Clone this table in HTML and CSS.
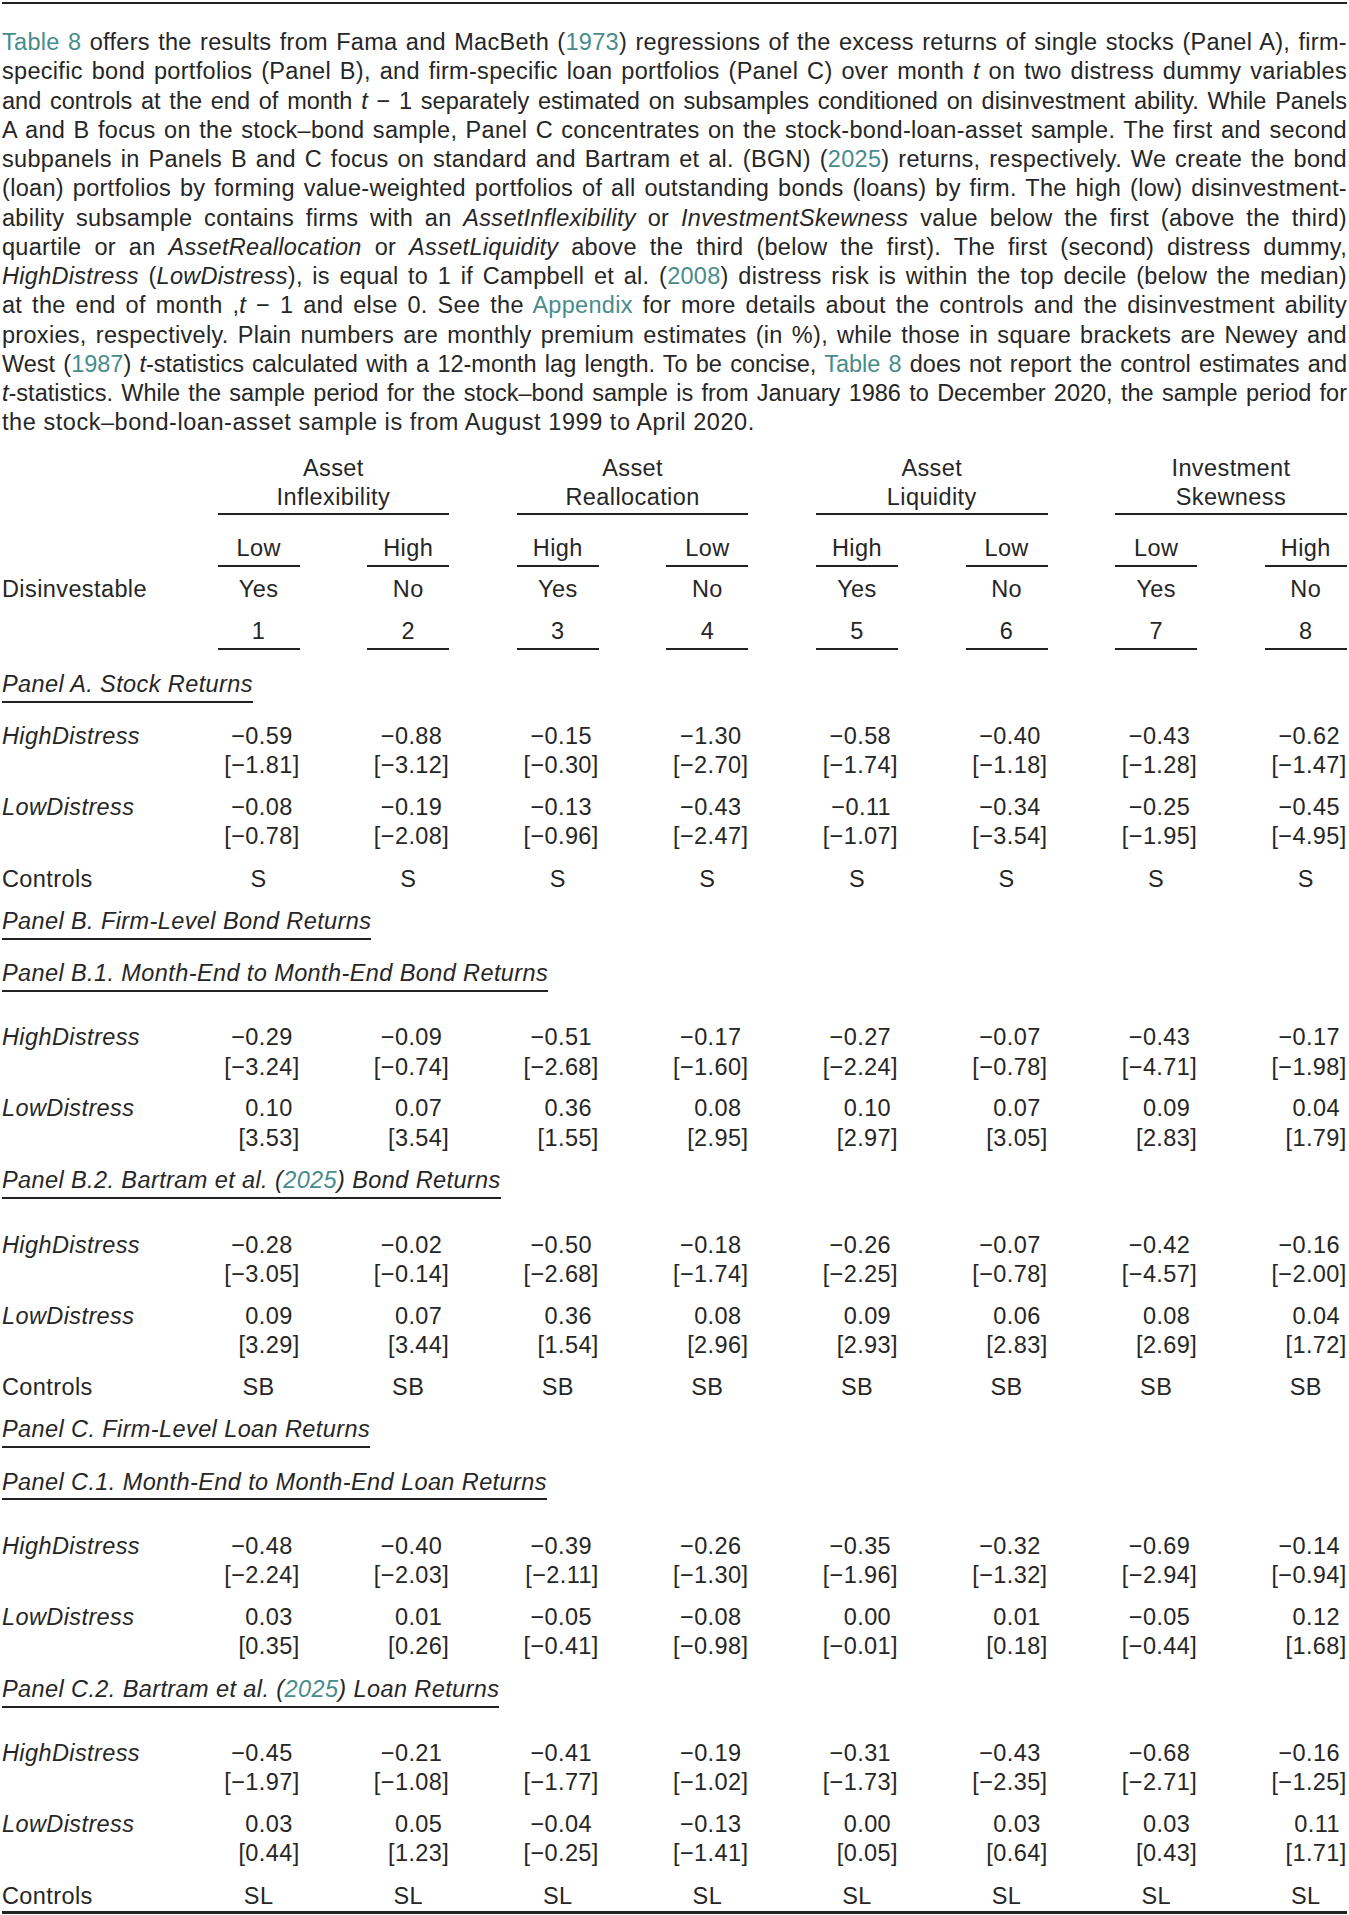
FILE: index.html
```html
<!DOCTYPE html>
<html lang="en">
<head>
<meta charset="utf-8">
<title>Table 8</title>
<link rel="stylesheet" href="styles.css">
</head>
<body>
<div class="page">
  <div class="top-rule"></div>
  <p class="caption">
    <span class="ln"><a class="ref">Table 8</a> offers the results from Fama and MacBeth (<a class="ref">1973</a>) regressions of the excess returns of single stocks (Panel A), firm-</span>
    <span class="ln">specific bond portfolios (Panel B), and firm-specific loan portfolios (Panel C) over month <i>t</i> on two distress dummy variables</span>
    <span class="ln tight">and controls at the end of month <i>t</i> − 1 separately estimated on subsamples conditioned on disinvestment ability. While Panels</span>
    <span class="ln">A and B focus on the stock–bond sample, Panel C concentrates on the stock-bond-loan-asset sample. The first and second</span>
    <span class="ln">subpanels in Panels B and C focus on standard and Bartram et al. (BGN) (<a class="ref">2025</a>) returns, respectively. We create the bond</span>
    <span class="ln">(loan) portfolios by forming value-weighted portfolios of all outstanding bonds (loans) by firm. The high (low) disinvestment-</span>
    <span class="ln">ability subsample contains firms with an <i>AssetInflexibility</i> or <i>InvestmentSkewness</i> value below the first (above the third)</span>
    <span class="ln">quartile or an <i>AssetReallocation</i> or <i>AssetLiquidity</i> above the third (below the first). The first (second) distress dummy,</span>
    <span class="ln"><i>HighDistress</i> (<i>LowDistress</i>), is equal to 1 if Campbell et al. (<a class="ref">2008</a>) distress risk is within the top decile (below the median)</span>
    <span class="ln">at the end of month ,<i>t</i> − 1 and else 0. See the <a class="ref">Appendix</a> for more details about the controls and the disinvestment ability</span>
    <span class="ln">proxies, respectively. Plain numbers are monthly premium estimates (in %), while those in square brackets are Newey and</span>
    <span class="ln tight">West (<a class="ref">1987</a>) <i>t</i>-statistics calculated with a 12-month lag length. To be concise, <a class="ref">Table 8</a> does not report the control estimates and</span>
    <span class="ln tight"><i>t</i>-statistics. While the sample period for the stock–bond sample is from January 1986 to December 2020, the sample period for</span>
    <span class="ln last">the stock–bond-loan-asset sample is from August 1999 to April 2020.</span>
  </p>

  <div class="tbl">
    <div class="row grp">
      <div class="lbl"></div>
      <div class="gh">Asset<br>Inflexibility</div>
      <div class="gh">Asset<br>Reallocation</div>
      <div class="gh">Asset<br>Liquidity</div>
      <div class="gh">Investment<br>Skewness</div>
    </div>
    <div class="row subh">
      <div class="lbl"></div>
      <div class="ch">Low</div><div class="ch">High</div>
      <div class="ch">High</div><div class="ch">Low</div>
      <div class="ch">High</div><div class="ch">Low</div>
      <div class="ch">Low</div><div class="ch">High</div>
    </div>
    <div class="row dis">
      <div class="lbl">Disinvestable</div>
      <div class="cc">Yes</div><div class="cc">No</div>
      <div class="cc">Yes</div><div class="cc">No</div>
      <div class="cc">Yes</div><div class="cc">No</div>
      <div class="cc">Yes</div><div class="cc">No</div>
    </div>
    <div class="row nums">
      <div class="lbl"></div>
      <div class="ch">1</div><div class="ch">2</div>
      <div class="ch">3</div><div class="ch">4</div>
      <div class="ch">5</div><div class="ch">6</div>
      <div class="ch">7</div><div class="ch">8</div>
    </div>

    <div class="ph first"><span>Panel A. Stock Returns</span></div>
    <div class="row stat">
      <div class="lbl it">HighDistress</div>
      <div class="v"><span class="e">−0.59</span><span>[−1.81]</span></div>
      <div class="v"><span class="e">−0.88</span><span>[−3.12]</span></div>
      <div class="v"><span class="e">−0.15</span><span>[−0.30]</span></div>
      <div class="v"><span class="e">−1.30</span><span>[−2.70]</span></div>
      <div class="v"><span class="e">−0.58</span><span>[−1.74]</span></div>
      <div class="v"><span class="e">−0.40</span><span>[−1.18]</span></div>
      <div class="v"><span class="e">−0.43</span><span>[−1.28]</span></div>
      <div class="v"><span class="e">−0.62</span><span>[−1.47]</span></div>
    </div>
    <div class="row stat">
      <div class="lbl it">LowDistress</div>
      <div class="v"><span class="e">−0.08</span><span>[−0.78]</span></div>
      <div class="v"><span class="e">−0.19</span><span>[−2.08]</span></div>
      <div class="v"><span class="e">−0.13</span><span>[−0.96]</span></div>
      <div class="v"><span class="e">−0.43</span><span>[−2.47]</span></div>
      <div class="v"><span class="e">−0.11</span><span>[−1.07]</span></div>
      <div class="v"><span class="e">−0.34</span><span>[−3.54]</span></div>
      <div class="v"><span class="e">−0.25</span><span>[−1.95]</span></div>
      <div class="v"><span class="e">−0.45</span><span>[−4.95]</span></div>
    </div>
    <div class="row ctrl">
      <div class="lbl">Controls</div>
      <div class="cc">S</div><div class="cc">S</div><div class="cc">S</div><div class="cc">S</div>
      <div class="cc">S</div><div class="cc">S</div><div class="cc">S</div><div class="cc">S</div>
    </div>

    <div class="ph"><span>Panel B. Firm-Level Bond Returns</span></div>
    <div class="ph sub"><span>Panel B.1. Month-End to Month-End Bond Returns</span></div>
    <div class="row stat">
      <div class="lbl it">HighDistress</div>
      <div class="v"><span class="e">−0.29</span><span>[−3.24]</span></div>
      <div class="v"><span class="e">−0.09</span><span>[−0.74]</span></div>
      <div class="v"><span class="e">−0.51</span><span>[−2.68]</span></div>
      <div class="v"><span class="e">−0.17</span><span>[−1.60]</span></div>
      <div class="v"><span class="e">−0.27</span><span>[−2.24]</span></div>
      <div class="v"><span class="e">−0.07</span><span>[−0.78]</span></div>
      <div class="v"><span class="e">−0.43</span><span>[−4.71]</span></div>
      <div class="v"><span class="e">−0.17</span><span>[−1.98]</span></div>
    </div>
    <div class="row stat">
      <div class="lbl it">LowDistress</div>
      <div class="v"><span class="e">0.10</span><span>[3.53]</span></div>
      <div class="v"><span class="e">0.07</span><span>[3.54]</span></div>
      <div class="v"><span class="e">0.36</span><span>[1.55]</span></div>
      <div class="v"><span class="e">0.08</span><span>[2.95]</span></div>
      <div class="v"><span class="e">0.10</span><span>[2.97]</span></div>
      <div class="v"><span class="e">0.07</span><span>[3.05]</span></div>
      <div class="v"><span class="e">0.09</span><span>[2.83]</span></div>
      <div class="v"><span class="e">0.04</span><span>[1.79]</span></div>
    </div>
    <div class="ph sub"><span>Panel B.2. Bartram et al. (<a class="ref">2025</a>) Bond Returns</span></div>
    <div class="row stat">
      <div class="lbl it">HighDistress</div>
      <div class="v"><span class="e">−0.28</span><span>[−3.05]</span></div>
      <div class="v"><span class="e">−0.02</span><span>[−0.14]</span></div>
      <div class="v"><span class="e">−0.50</span><span>[−2.68]</span></div>
      <div class="v"><span class="e">−0.18</span><span>[−1.74]</span></div>
      <div class="v"><span class="e">−0.26</span><span>[−2.25]</span></div>
      <div class="v"><span class="e">−0.07</span><span>[−0.78]</span></div>
      <div class="v"><span class="e">−0.42</span><span>[−4.57]</span></div>
      <div class="v"><span class="e">−0.16</span><span>[−2.00]</span></div>
    </div>
    <div class="row stat">
      <div class="lbl it">LowDistress</div>
      <div class="v"><span class="e">0.09</span><span>[3.29]</span></div>
      <div class="v"><span class="e">0.07</span><span>[3.44]</span></div>
      <div class="v"><span class="e">0.36</span><span>[1.54]</span></div>
      <div class="v"><span class="e">0.08</span><span>[2.96]</span></div>
      <div class="v"><span class="e">0.09</span><span>[2.93]</span></div>
      <div class="v"><span class="e">0.06</span><span>[2.83]</span></div>
      <div class="v"><span class="e">0.08</span><span>[2.69]</span></div>
      <div class="v"><span class="e">0.04</span><span>[1.72]</span></div>
    </div>
    <div class="row ctrl">
      <div class="lbl">Controls</div>
      <div class="cc">SB</div><div class="cc">SB</div><div class="cc">SB</div><div class="cc">SB</div>
      <div class="cc">SB</div><div class="cc">SB</div><div class="cc">SB</div><div class="cc">SB</div>
    </div>

    <div class="ph"><span>Panel C. Firm-Level Loan Returns</span></div>
    <div class="ph sub"><span>Panel C.1. Month-End to Month-End Loan Returns</span></div>
    <div class="row stat">
      <div class="lbl it">HighDistress</div>
      <div class="v"><span class="e">−0.48</span><span>[−2.24]</span></div>
      <div class="v"><span class="e">−0.40</span><span>[−2.03]</span></div>
      <div class="v"><span class="e">−0.39</span><span>[−2.11]</span></div>
      <div class="v"><span class="e">−0.26</span><span>[−1.30]</span></div>
      <div class="v"><span class="e">−0.35</span><span>[−1.96]</span></div>
      <div class="v"><span class="e">−0.32</span><span>[−1.32]</span></div>
      <div class="v"><span class="e">−0.69</span><span>[−2.94]</span></div>
      <div class="v"><span class="e">−0.14</span><span>[−0.94]</span></div>
    </div>
    <div class="row stat">
      <div class="lbl it">LowDistress</div>
      <div class="v"><span class="e">0.03</span><span>[0.35]</span></div>
      <div class="v"><span class="e">0.01</span><span>[0.26]</span></div>
      <div class="v"><span class="e">−0.05</span><span>[−0.41]</span></div>
      <div class="v"><span class="e">−0.08</span><span>[−0.98]</span></div>
      <div class="v"><span class="e">0.00</span><span>[−0.01]</span></div>
      <div class="v"><span class="e">0.01</span><span>[0.18]</span></div>
      <div class="v"><span class="e">−0.05</span><span>[−0.44]</span></div>
      <div class="v"><span class="e">0.12</span><span>[1.68]</span></div>
    </div>
    <div class="ph sub"><span>Panel C.2. Bartram et al. (<a class="ref">2025</a>) Loan Returns</span></div>
    <div class="row stat">
      <div class="lbl it">HighDistress</div>
      <div class="v"><span class="e">−0.45</span><span>[−1.97]</span></div>
      <div class="v"><span class="e">−0.21</span><span>[−1.08]</span></div>
      <div class="v"><span class="e">−0.41</span><span>[−1.77]</span></div>
      <div class="v"><span class="e">−0.19</span><span>[−1.02]</span></div>
      <div class="v"><span class="e">−0.31</span><span>[−1.73]</span></div>
      <div class="v"><span class="e">−0.43</span><span>[−2.35]</span></div>
      <div class="v"><span class="e">−0.68</span><span>[−2.71]</span></div>
      <div class="v"><span class="e">−0.16</span><span>[−1.25]</span></div>
    </div>
    <div class="row stat">
      <div class="lbl it">LowDistress</div>
      <div class="v"><span class="e">0.03</span><span>[0.44]</span></div>
      <div class="v"><span class="e">0.05</span><span>[1.23]</span></div>
      <div class="v"><span class="e">−0.04</span><span>[−0.25]</span></div>
      <div class="v"><span class="e">−0.13</span><span>[−1.41]</span></div>
      <div class="v"><span class="e">0.00</span><span>[0.05]</span></div>
      <div class="v"><span class="e">0.03</span><span>[0.64]</span></div>
      <div class="v"><span class="e">0.03</span><span>[0.43]</span></div>
      <div class="v"><span class="e">0.11</span><span>[1.71]</span></div>
    </div>
    <div class="row ctrl">
      <div class="lbl">Controls</div>
      <div class="cc">SL</div><div class="cc">SL</div><div class="cc">SL</div><div class="cc">SL</div>
      <div class="cc">SL</div><div class="cc">SL</div><div class="cc">SL</div><div class="cc">SL</div>
    </div>
  </div>
  <div class="bottom-rule"></div>
</div>
</body>
</html>
```

FILE: styles.css
```css
html, body {
  margin: 0;
  padding: 0;
  background: #ffffff;
}

body {
  font-family: "Liberation Sans", Arial, Helvetica, sans-serif;
  font-size: 23.5px;
  line-height: 29.25px;
  color: #262626;
}

.page {
  width: 1349px;
  box-sizing: border-box;
  padding: 2px 2px 0;
}

.top-rule {
  height: 2px;
  background: #222222;
}

.caption {
  margin: 24px 0 0;
}

.ln {
  display: block;
  text-align: justify;
  text-align-last: justify;
  letter-spacing: 0.3px;
}

.ln.tight {
  letter-spacing: 0;
}

.ln.last {
  text-align-last: left;
  letter-spacing: 0.55px;
}

.ref {
  color: #478c8b;
  text-decoration: none;
}

/* table */
.tbl {
  margin-top: 16.4px;
  letter-spacing: 0.4px;
}

.row {
  display: grid;
  grid-template-columns: 148px repeat(8, 82px);
  column-gap: 67.6px;
}

.lbl {
  white-space: nowrap;
}

.it {
  font-style: italic;
}

.gh {
  grid-column: span 2;
  text-align: center;
  padding-bottom: 1px;
  border-bottom: 2px solid #222222;
}

.subh {
  margin-top: 18.5px;
}

.ch {
  text-align: center;
  padding-bottom: 1.5px;
  border-bottom: 2px solid #222222;
}

.dis {
  margin-top: 8.85px;
}

.nums {
  margin-top: 12.45px;
}

.cc {
  text-align: center;
}

.v {
  display: flex;
  flex-direction: column;
  align-items: flex-end;
  white-space: nowrap;
}

.v .e {
  padding-right: 6.9px;
}

/* panel headings */
.ph {
  display: flex;
  margin-top: 13px;
}

.ph span {
  font-style: italic;
  white-space: nowrap;
  padding-bottom: 1.5px;
  border-bottom: 2px solid #222222;
}

.ph.first {
  margin-top: 20.5px;
}

.ph + .ph {
  margin-top: 19.5px;
}

.stat {
  margin-top: 12.5px;
}

.ctrl {
  margin-top: 13px;
}

.stat + .ph {
  margin-top: 13.5px;
}

.ph + .stat {
  margin-top: 19px;
}

.ph.sub + .stat {
  margin-top: 31.5px;
}

.bottom-rule {
  height: 3px;
  background: #222222;
}
```
